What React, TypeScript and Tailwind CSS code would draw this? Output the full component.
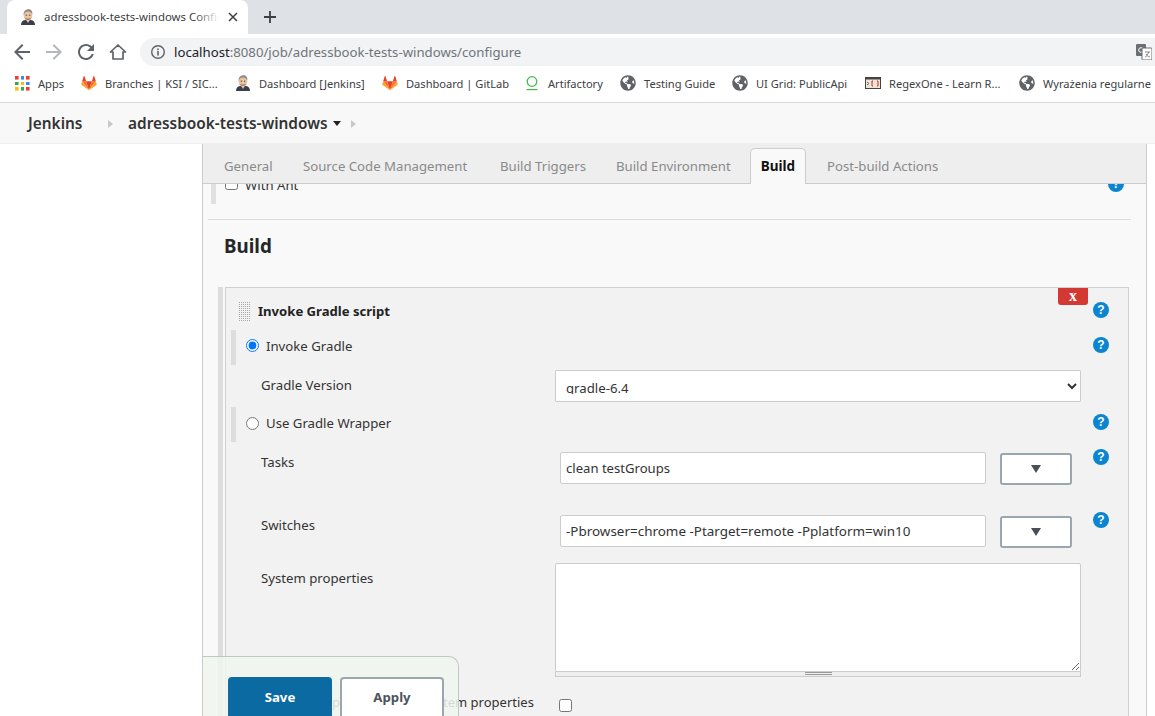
import React from "react";
import { FaGlobeAmericas } from "react-icons/fa";

const Head = ({ s = 16 }: { s?: number }) => (
  <svg width={s} height={s} viewBox="0 0 16 16" className="shrink-0">
    <path d="M1 16c0-3 1.5-4.5 4-5h6c2.500.5 4 2 4 5z" fill="#3a3f4a" />
    <path d="M6.500 11l1.500 3 1.500-3z" fill="#e8e4dc" />
    <ellipse cx="8" cy="6.500" rx="4.300" ry="5.300" fill="#e9c4a2" />
    <path d="M3.700 6.500C3.200 2.500 5.500.3 8.300.3s4.600 2 4 5.500c-.6-2-2-3.300-4.500-3.200C5.500 2.700 4.300 4 3.700 6.500z" fill="#8d8a86" />
    <path d="M5.500 9.500c1.500 1 3.500 1 5 0" stroke="#8a5a48" strokeWidth="1" fill="none" />
    <circle cx="6.300" cy="6.200" r=".6" fill="#333" />
    <circle cx="9.700" cy="6.200" r=".6" fill="#333" />
  </svg>
);

const Fox = () => (
  <svg width="16" height="16" viewBox="0 0 16 16" className="shrink-0">
    <path d="M8 15.200L5.100 6.300h5.800z" fill="#e24329" />
    <path d="M8 15.200L5.100 6.300H1.200z" fill="#fc6d26" />
    <path d="M8 15.200l2.900-8.900h3.900z" fill="#fc6d26" />
    <path d="M1.200 6.300L.3 9.100c-.1.400 0 .7.300.9L8 15.200z" fill="#fca326" />
    <path d="M14.800 6.300l.9 2.800c.1.400 0 .7-.3.900L8 15.200z" fill="#fca326" />
    <path d="M1.200 6.300h3.900L3.400 1.100c-.1-.3-.5-.3-.6 0z" fill="#e24329" />
    <path d="M14.800 6.300h-3.900l1.700-5.200c.1-.3.500-.3.600 0z" fill="#e24329" />
  </svg>
);

const Globe = () => <FaGlobeAmericas className="shrink-0 text-[16px] text-[#5f6368]" />;

const Apps = () => {
  const c = ["#ea4335", "#4285f4", "#ea4335", "#34a853", "#fbbc05", "#4285f4", "#fbbc05", "#34a853", "#ea4335"];
  return (
    <div className="grid h-[15px] w-[15px] shrink-0 grid-cols-3 gap-[2px]">
      {c.map((x, i) => (
        <svg key={i} viewBox="0 0 3 3" className="h-[3.600px] w-[3.600px]">
          <rect width="3" height="3" fill={x} />
        </svg>
      ))}
    </div>
  );
};

const Ring = () => (
  <svg width="16" height="16" viewBox="0 0 16 16" className="shrink-0">
    <circle cx="8" cy="6.500" r="4.800" fill="none" stroke="#40be46" strokeWidth="1.300" />
    <rect x="2.500" y="14" width="11" height="1.200" fill="#40be46" />
  </svg>
);

const Regex = () => (
  <svg width="16" height="16" viewBox="0 0 16 16" className="shrink-0">
    <rect x=".5" y="2.500" width="15" height="11" fill="#f3e2d6" stroke="#444" />
    <rect x=".5" y="2.500" width="15" height="2" fill="#444" />
    <path d="M2 7l2 1.500L2 10" stroke="#2f8f4e" strokeWidth="1" fill="none" />
    <path d="M8 6H7v5h1M12 6h1v5h-1" stroke="#a33" strokeWidth="1" fill="none" />
  </svg>
);

const Dots = () => (
  <svg width="11" height="20" viewBox="0 0 11 20" className="ml-[13px] shrink-0">
    {Array.from({ length: 60 }).map((_, i) => (
      <rect key={i} x={(i % 6) * 2} y={Math.floor(i / 6) * 2} width="1" height="1" fill="#a8a8a8" />
    ))}
  </svg>
);

const bookmarks: [React.ReactNode, string, string][] = [
  [<Apps />, "Apps", "w-[27px]"],
  [<Fox />, "Branches | KSI / SIC...", "w-[114px]"],
  [<Head />, "Dashboard [Jenkins]", "w-[107px]"],
  [<Fox />, "Dashboard | GitLab", "w-[102px]"],
  [<Ring />, "Artifactory", "w-[56px]"],
  [<Globe />, "Testing Guide", "w-[72px]"],
  [<Globe />, "UI Grid: PublicApi", "w-[93px]"],
  [<Regex />, "RegexOne - Learn R...", "w-[114px]"],
  [<Globe />, "Wyrażenia regularne", "w-[112px]"],
];

const Help = ({ className = "" }: { className?: string }) => (
  <span
    className={`flex h-4 w-4 shrink-0 items-center justify-center rounded-full bg-[#0b85d2] text-[12px] leading-none font-bold text-white [font-family:'Liberation_Sans',sans-serif] ${className}`}
  >
    ?
  </span>
);

const Chev = () => (
  <svg width="7" height="8" viewBox="0 0 7 8" className="shrink-0">
    <path d="M1 0l5 4-5 4z" fill="#c8c8c8" />
  </svg>
);

const DropBtn = ({ className = "" }: { className?: string }) => (
  <button className={`ml-[14px] flex h-[32px] w-[72px] shrink-0 items-center justify-center rounded-[3px] border-2 border-[#9ba7af] bg-white ${className}`}>
    <svg width="10" height="8" viewBox="0 0 10 8">
      <path d="M0 0h10L5 8z" fill="#4a4f57" />
    </svg>
  </button>
);

const tabs: [string, string][] = [
  ["General", "ml-[21px] w-[48px]"],
  ["Source Code Management", "ml-[31px] w-[165px]"],
  ["Build Triggers", "ml-[32px] w-[84px]"],
  ["Build Environment", "ml-[32px] w-[114px]"],
];

export default function App() {
  return (
    <div className="relative flex h-[716px] w-[1155px] flex-col overflow-hidden bg-white text-[13.2px] text-[#333] [font-family:'Noto_Sans','Open_Sans',sans-serif]">
      {/* tab strip */}
      <div className="flex h-[34px] shrink-0 items-end bg-[#dee1e6]">
        <div className="ml-[7px] flex h-[34px] w-[241px] items-center rounded-t-[8px] bg-white pl-[13px]">
          <Head />
          <span className="relative ml-[8px] w-[175px] overflow-hidden text-[11.4px] whitespace-nowrap text-[#3c4043]">
            adressbook-tests-windows Configuration
            <span className="absolute top-0 right-0 h-full w-[24px] bg-gradient-to-r from-white/0 to-white" />
          </span>
          <svg width="10" height="10" viewBox="0 0 10 10" className="ml-[9px]">
            <path d="M1 1l8 8M9 1l-8 8" stroke="#3c4043" strokeWidth="1.500" />
          </svg>
        </div>
        <svg width="12" height="12" viewBox="0 0 12 12" className="mb-[11px] ml-[16px]">
          <path d="M6 0v12M0 6h12" stroke="#3c4043" strokeWidth="1.800" />
        </svg>
      </div>
      {/* toolbar */}
      <div className="flex h-[32px] shrink-0 items-end bg-white">
        <div className="flex h-[28px] w-[140px] items-center">
          <svg width="24" height="24" viewBox="0 0 24 24" className="ml-[10px] fill-[#5f6368]">
            <path d="M20 11H7.830l5.590-5.590L12 4l-8 8 8 8 1.410-1.410L7.830 13H20v-2z" />
          </svg>
          <svg width="24" height="24" viewBox="0 0 24 24" className="ml-[8px] fill-[#b4b7bb]">
            <path d="M12 4l-1.410 1.410L16.170 11H4v2h12.170l-5.580 5.590L12 20l8-8z" />
          </svg>
          <svg width="24" height="24" viewBox="0 0 24 24" className="ml-[8px] fill-[#5f6368]">
            <path d="M17.650 6.350C16.200 4.900 14.210 4 12 4c-4.420 0-7.990 3.580-7.990 8s3.570 8 7.990 8c3.730 0 6.840-2.550 7.730-6h-2.080c-.820 2.330-3.040 4-5.650 4-3.310 0-6-2.690-6-6s2.690-6 6-6c1.660 0 3.140.690 4.220 1.780L13 11h7V4l-2.350 2.350z" />
          </svg>
          <svg width="20" height="20" viewBox="0 0 20 20" className="ml-[10px]">
            <path d="M10 3L2.500 10H5v7h10v-7h2.500z" fill="none" stroke="#5f6368" strokeWidth="1.700" strokeLinejoin="round" />
          </svg>
        </div>
        <div className="flex h-[28px] flex-1 items-center rounded-l-[14px] bg-[#f1f3f4] pl-[10px]">
          <svg width="16" height="16" viewBox="0 0 16 16">
            <circle cx="8" cy="8" r="6.300" fill="none" stroke="#5f6368" strokeWidth="1.400" />
            <rect x="7.200" y="7" width="1.600" height="4.500" fill="#5f6368" />
            <rect x="7.200" y="4.500" width="1.600" height="1.600" fill="#5f6368" />
          </svg>
          <span className="ml-[8px] pt-[1px] text-[13.2px] text-[#70757a]">
            <span className="text-[#202124]">localhost</span>:8080/job/adressbook-tests-windows/configure
          </span>
          <svg width="16" height="16" viewBox="0 0 16 16" className="mr-[3px] ml-auto">
            <rect x="0" y="0" width="10" height="12" rx="1" fill="#6b6f74" />
            <circle cx="5" cy="6" r="2.300" fill="none" stroke="#fff" strokeWidth="1" />
            <rect x="6" y="4" width="10" height="12" rx="1" fill="#fff" stroke="#6b6f74" />
            <path d="M9 8h5M12.500 8c-.5 3-2 4.500-3.500 5M10 10c.8 1.500 2 2.500 4 3" stroke="#6b6f74" strokeWidth=".8" fill="none" />
          </svg>
        </div>
      </div>
      {/* bookmarks */}
      <div className="flex h-[37px] shrink-0 items-center gap-4 border-b border-[#d9d9d9] bg-white pb-[1px] pl-[15px]">
        {bookmarks.map(([icon, label, w], i) => (
          <div key={i} className="flex shrink-0 items-center gap-2">
            {icon}
            <span className={`${w} pt-[1px] text-[11.1px] whitespace-nowrap text-[#3c4043]`}>{label}</span>
          </div>
        ))}
      </div>
      {/* jenkins bar */}
      <div className="flex h-[40px] shrink-0 items-center bg-[#f8f8f8] pt-[1px] text-[15.4px] font-semibold text-[#333]">
        <span className="ml-[28px] w-[56px] whitespace-nowrap">Jenkins</span>
        <span className="mr-[14px] ml-[23px]">
          <Chev />
        </span>
        <span className="w-[200px] whitespace-nowrap">adressbook-tests-windows</span>
        <svg width="8" height="5" viewBox="0 0 8 5" className="ml-[5px]">
          <path d="M0 0h8L4 5z" fill="#222" />
        </svg>
        <span className="ml-[9px]">
          <Chev />
        </span>
      </div>
      {/* main */}
      <div className="flex min-h-0 flex-1 border-t border-[#eeeeee]">
        <div className="w-[202px] shrink-0 bg-white" />
        <div className="flex w-[945px] shrink-0 flex-col border-x border-[#cccccc] bg-[#f9f9f9]">
          {/* tab bar */}
          <div className="z-10 flex h-[40px] shrink-0 items-end border-b border-[#cccccc] bg-[#eeeeee] text-[13.2px] text-[#8a8a8a]">
            {tabs.map(([t, c]) => (
              <span key={t} className={`${c} mb-[6px] whitespace-nowrap`}>
                {t}
              </span>
            ))}
            <span className="relative top-[1px] ml-[20px] flex h-[36px] w-[56px] items-center justify-center rounded-t-[5px] border border-b-0 border-[#cccccc] bg-[#f9f9f9] text-[13.5px] font-bold text-[#111]">
              Build
            </span>
            <span className="mb-[6px] ml-[21px] w-[113px] whitespace-nowrap">Post-build Actions</span>
          </div>
          {/* scroll area */}
          <div className="min-h-0 flex-1 overflow-hidden">
            <div className="-mt-[20px] flex h-[40px] items-start pl-[8px]">
              <div className="h-full w-[5px] bg-[#e0e0e0]" />
              <input type="checkbox" readOnly className="mt-[13px] ml-[9px] h-[13px] w-[13px]" />
              <span className="mt-[12px] ml-[7px] leading-[19px]">With Ant</span>
              <Help className="mt-[12px] mr-[22px] ml-auto" />
            </div>
            <div className="mx-[5px] mt-[15px] h-px w-[923px] bg-[#dddddd]" />
            <h2 className="mt-[12px] ml-[21px] text-[18.8px] leading-[28px] font-bold text-[#262626]">Build</h2>
            <div className="mt-[27px] ml-[15px] flex w-[911px] items-stretch">
              <div className="w-[5px] shrink-0 bg-[#dddddd]" />
              <div className="relative ml-[2px] h-[600px] w-[904px] border border-[#d0d0d0] bg-[#f2f2f2]">
                <span className="absolute top-0 right-[40px] flex h-[17px] w-[30px] items-center justify-center rounded-b-[3px] bg-[#d33833] pb-[1px] text-[16px] leading-none font-bold text-white [font-family:'Liberation_Serif',serif]">
                  x
                </span>
                {/* title */}
                <div className="flex h-[42px] items-center pt-[5px]">
                  <Dots />
                  <span className="ml-[8px] text-[13.1px] font-bold text-[#222]">Invoke Gradle script</span>
                  <Help className="mr-[19px] ml-auto -translate-y-[2px]" />
                </div>
                {/* radio 1 */}
                <div className="ml-[5px] flex h-[35px] items-center pb-[5px]">
                  <div className="-mb-[5px] h-[35px] w-[5px] bg-[#dddddd]" />
                  <input type="radio" name="g" defaultChecked className="ml-[10px] h-[13px] w-[13px]" />
                  <span className="mt-[4px] ml-[7px]">Invoke Gradle</span>
                  <Help className="mr-[19px] ml-auto" />
                </div>
                {/* version */}
                <div className="flex h-[42px] pt-[5px]">
                  <span className="ml-[35px] w-[294px] pt-[5px] leading-[20px]">Gradle Version</span>
                  <select className="h-[32px] w-[526px] rounded-[1px] border border-[#cccccc] bg-white pt-[7px] pb-[7px] pl-[6px] text-[13.2px] text-[#333]">
                    <option>gradle-6.4</option>
                  </select>
                </div>
                {/* radio 2 */}
                <div className="ml-[5px] flex h-[35px] items-center">
                  <div className="h-[35px] w-[5px] bg-[#dddddd]" />
                  <input type="radio" name="g" className="mb-[3px] ml-[10px] h-[13px] w-[13px]" />
                  <span className="mb-[1px] ml-[7px]">Use Gradle Wrapper</span>
                  <Help className="mr-[19px] mb-[5px] ml-auto" />
                </div>
                {/* tasks */}
                <div className="flex h-[63px] items-start pt-[10px]">
                  <span className="ml-[35px] w-[299px] leading-[20px]">Tasks</span>
                  <input
                    readOnly
                    value="clean testGroups"
                    className="h-[32px] w-[426px] rounded-[2px] border border-[#cccccc] bg-white pl-[5px] text-[13.1px] text-[#333]"
                  />
                  <DropBtn className="mt-[1px]" />
                  <Help className="mt-[-3px] ml-[21px]" />
                </div>
                {/* switches */}
                <div className="flex h-[58px] items-start pt-[10px]">
                  <span className="ml-[35px] w-[299px] leading-[20px]">Switches</span>
                  <input
                    readOnly
                    value="-Pbrowser=chrome -Ptarget=remote -Pplatform=win10"
                    className="h-[32px] w-[426px] rounded-[2px] border border-[#cccccc] bg-white pl-[5px] text-[13.45px] text-[#333]"
                  />
                  <DropBtn className="mt-[1px]" />
                  <Help className="mt-[-3px] ml-[21px]" />
                </div>
                {/* system props */}
                <div className="flex h-[114px] items-start">
                  <span className="ml-[35px] w-[294px] pt-[5px] leading-[20px]">System properties</span>
                  <div className="flex w-[526px] flex-col">
                    <textarea readOnly className="h-[109px] w-full rounded-t-[2px] border border-[#cccccc] bg-white" />
                    <div className="flex h-[5px] justify-center border-x border-b border-[#cccccc] bg-[#eeeeee]">
                      <div className="h-[3px] w-[27px] border-y border-[#999999]" />
                    </div>
                  </div>
                </div>
                {/* checkbox row */}
                <div className="flex items-start pt-[15px]">
                  <span className="ml-[35px] w-[298px] text-[13px] leading-[20px] whitespace-nowrap">
                    Pass all job parameters as System properties
                  </span>
                  <input type="checkbox" readOnly className="mt-[7px] h-[13px] w-[13px]" />
                </div>
              </div>
            </div>
          </div>
        </div>
      </div>
      {/* save bar */}
      <div className="absolute top-[656px] left-[203px] z-20 flex h-[60px] w-[256px] gap-2 overflow-hidden rounded-tr-[10px] border-t border-r border-[#bccabc] bg-[#f1f6f0]/85 pt-[20px] pl-[25px]">
        <button className="h-[50px] w-[104px] rounded-[4px] bg-[#0b6aa2] pb-[9px] text-[13.2px] font-bold text-white">Save</button>
        <button className="h-[50px] w-[104px] rounded-[4px] border-2 border-[#9ba7af] bg-white pb-[9px] text-[13.2px] font-bold text-[#4d545d]">Apply</button>
      </div>
    </div>
  );
}
